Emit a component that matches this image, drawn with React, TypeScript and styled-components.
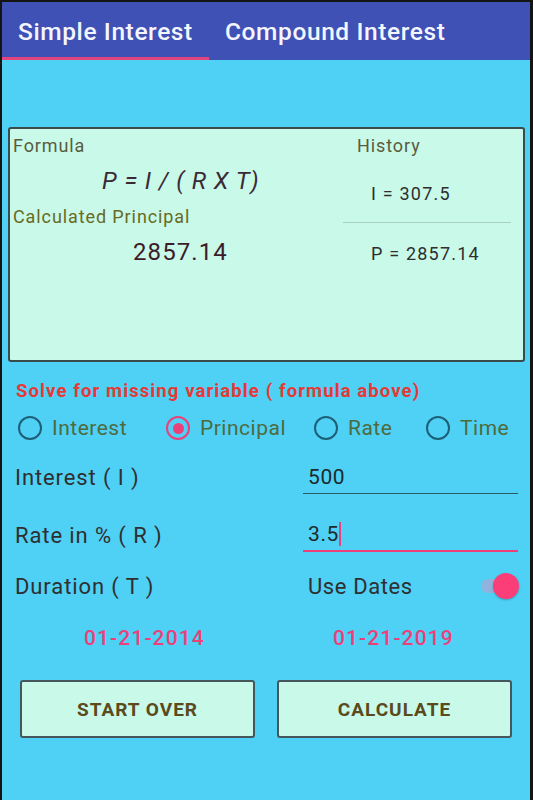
import React, { useState } from "react";
import styled, { createGlobalStyle } from "styled-components";

const GlobalStyle = createGlobalStyle`
  html, body {
    margin: 0;
    padding: 0;
    background: #141414;
  }
  body {
    font-family: Roboto, "Noto Sans", "Liberation Sans", sans-serif;
  }
`;

const Screen = styled.div`
  box-sizing: border-box;
  width: 533px;
  height: 800px;
  border-left: 2px solid #141414;
  border-right: 3px solid #141414;
  border-top: 2px solid #141414;
  background: #4fd0f5;
  display: flex;
  flex-direction: column;
  overflow: hidden;
`;

const TabBar = styled.div`
  display: flex;
  height: 58px;
  background: #3f51b5;
`;

const Tab = styled.div<{ $active?: boolean }>`
  padding: 0 0 0 16px;
  display: flex;
  align-items: center;
  color: #f4f6ff;
  font-size: 24.5px;
  font-weight: 500;
  letter-spacing: 0.6px;
  box-shadow: ${(p) => (p.$active ? "inset 0 -3px 0 #e2447e" : "none")};
  &:first-child {
    width: 207px;
    box-sizing: border-box;
  }
`;

const Body = styled.div`
  padding: 67px 5px 0 6px;
  display: flex;
  flex-direction: column;
`;

const Card = styled.div`
  height: 235px;
  box-sizing: border-box;
  border: 2px solid #3b4a4a;
  border-radius: 3px;
  background: #c8f9e9;
  display: grid;
  grid-template-columns: 1fr 180px;
`;

const FormulaCol = styled.div`
  padding: 6px 0 0 3px;
  display: flex;
  flex-direction: column;
`;

const SmallLabel = styled.div<{ $tone?: string; $gap?: number }>`
  font-size: 18px;
  letter-spacing: 0.9px;
  color: ${(p) => p.$tone || "#5b5b3c"};
  line-height: 22px;
  margin-top: ${(p) => p.$gap || 0}px;
`;

const Formula = styled.div`
  font-size: 24px;
  font-style: italic;
  color: #3a2a36;
  padding-left: 89px;
  margin-top: 10px;
  line-height: 28px;
  letter-spacing: 0.9px;
`;

const Result = styled.div`
  font-size: 24px;
  color: #3c1c28;
  padding-left: 120px;
  margin-top: 10px;
  letter-spacing: 1.1px;
`;

const HistoryCol = styled.div`
  padding-top: 6px;
  display: flex;
  flex-direction: column;
`;

const HistoryTitle = styled(SmallLabel)`
  padding-left: 14px;
`;

const HistoryItem = styled.div<{ $divider?: boolean }>`
  height: ${(p) => (p.$divider ? 66 : 60)}px;
  box-sizing: border-box;
  padding-left: 28px;
  padding-top: ${(p) => (p.$divider ? 8 : 0)}px;
  display: flex;
  align-items: center;
  font-size: 18px;
  letter-spacing: 1.2px;
  color: #2e2e2e;
  border-bottom: ${(p) => (p.$divider ? "1px solid #a9cfc4" : "none")};
  margin-right: 12px;
`;

const Prompt = styled.div`
  margin: 18px 0 0 8px;
  font-size: 18.5px;
  font-weight: 700;
  letter-spacing: 1.1px;
  color: #e53935;
`;

const RadioRow = styled.div`
  display: flex;
  margin-top: 11px;
  padding-left: 10px;
  height: 30px;
  align-items: center;
`;

const RadioItem = styled.label<{ $width: number }>`
  display: flex;
  align-items: center;
  width: ${(p) => p.$width}px;
  font-size: 21px;
  letter-spacing: 0.5px;
  color: #4e6b3d;
  cursor: pointer;
`;

const RadioCircle = styled.span<{ $checked?: boolean }>`
  box-sizing: border-box;
  width: 24px;
  height: 24px;
  border-radius: 50%;
  border: 2.5px solid ${(p) => (p.$checked ? "#ec407a" : "#1e5f78")};
  margin-right: 10px;
  display: flex;
  align-items: center;
  justify-content: center;
  &::after {
    content: "";
    width: 11px;
    height: 11px;
    border-radius: 50%;
    background: #ec407a;
    display: ${(p) => (p.$checked ? "block" : "none")};
  }
`;

const FieldRow = styled.div<{ $height: number }>`
  display: grid;
  grid-template-columns: 288px 1fr;
  height: ${(p) => p.$height}px;
  align-items: center;
  padding-left: 7px;
`;

const FieldLabel = styled.div`
  font-size: 22px;
  letter-spacing: 0.9px;
  color: #2f2f2f;
`;

const InputWrap = styled.div<{ $focused?: boolean }>`
  margin-right: 7px;
  padding: 0 0 0 5px;
  height: 32px;
  display: flex;
  align-items: center;
  border-bottom: ${(p) => (p.$focused ? "2px solid #ec407a" : "1px solid #2b5a66")};
  font-size: 21px;
  letter-spacing: 0.6px;
  color: #1e2a2a;
`;

const Caret = styled.span`
  display: inline-block;
  width: 2px;
  height: 24px;
  background: #ec407a;
`;

const DatesRow = styled.div`
  display: flex;
  padding-left: 76px;
  margin-top: 17px;
  line-height: 25px;
  font-size: 21px;
  font-weight: 500;
  color: #ec407a;
  letter-spacing: 1.1px;
  & > span:first-child {
    width: 249px;
  }
`;

const UseDates = styled.div`
  display: flex;
  align-items: center;
  justify-content: space-between;
  padding-left: 5px;
  font-size: 22px;
  letter-spacing: 0.6px;
  color: #2f2f2f;
`;

const Switch = styled.div`
  position: relative;
  width: 40px;
  height: 26px;
  margin-right: 6px;
  &::before {
    content: "";
    position: absolute;
    left: 2px;
    top: 6px;
    width: 30px;
    height: 14px;
    border-radius: 7px;
    background: #8fb3dc;
  }
  &::after {
    content: "";
    position: absolute;
    right: 0;
    top: 0;
    width: 26px;
    height: 26px;
    border-radius: 50%;
    background: #fb3d78;
    box-shadow: 0 1px 2px rgba(0, 0, 0, 0.25);
  }
`;

const ButtonRow = styled.div`
  display: grid;
  grid-template-columns: 1fr 1fr;
  gap: 22px;
  padding: 0 13px 0 12px;
  margin-top: 29px;
`;

const ActionButton = styled.button`
  height: 58px;
  border: 2px solid #45575a;
  border-radius: 3px;
  background: #c8f9e9;
  font-family: Roboto, "Liberation Sans", sans-serif;
  font-size: 19px;
  font-weight: 700;
  color: #5a4a1c;
  letter-spacing: 1px;
  cursor: pointer;
`;

const options = [
  { label: "Interest", width: 148 },
  { label: "Principal", width: 148 },
  { label: "Rate", width: 112 },
  { label: "Time", width: 90 },
];

export default function App() {
  const [solveFor, setSolveFor] = useState("Principal");

  return (
    <>
      <GlobalStyle />
      <Screen>
        <TabBar>
          <Tab $active>Simple Interest</Tab>
          <Tab>Compound Interest</Tab>
        </TabBar>
        <Body>
          <Card>
            <FormulaCol>
              <SmallLabel>Formula</SmallLabel>
              <Formula>P = I / ( R X T)</Formula>
              <SmallLabel $tone="#6a6a22" $gap={11}>
                Calculated Principal
              </SmallLabel>
              <Result>2857.14</Result>
            </FormulaCol>
            <HistoryCol>
              <HistoryTitle>History</HistoryTitle>
              <HistoryItem $divider>I = 307.5</HistoryItem>
              <HistoryItem>P = 2857.14</HistoryItem>
            </HistoryCol>
          </Card>

          <Prompt>Solve for missing variable ( formula above)</Prompt>
          <RadioRow>
            {options.map((o) => (
              <RadioItem key={o.label} $width={o.width} onClick={() => setSolveFor(o.label)}>
                <RadioCircle $checked={solveFor === o.label} />
                {o.label}
              </RadioItem>
            ))}
          </RadioRow>

          <FieldRow $height={60} style={{ marginTop: 4 }}>
            <FieldLabel>Interest ( I )</FieldLabel>
            <InputWrap>500</InputWrap>
          </FieldRow>
          <FieldRow $height={56}>
            <FieldLabel>Rate in % ( R )</FieldLabel>
            <InputWrap $focused>
              3.5
              <Caret />
            </InputWrap>
          </FieldRow>
          <FieldRow $height={46}>
            <FieldLabel>Duration ( T )</FieldLabel>
            <UseDates>
              Use Dates
              <Switch />
            </UseDates>
          </FieldRow>

          <DatesRow>
            <span>01-21-2014</span>
            <span>01-21-2019</span>
          </DatesRow>

          <ButtonRow>
            <ActionButton>START OVER</ActionButton>
            <ActionButton>CALCULATE</ActionButton>
          </ButtonRow>
        </Body>
      </Screen>
    </>
  );
}
